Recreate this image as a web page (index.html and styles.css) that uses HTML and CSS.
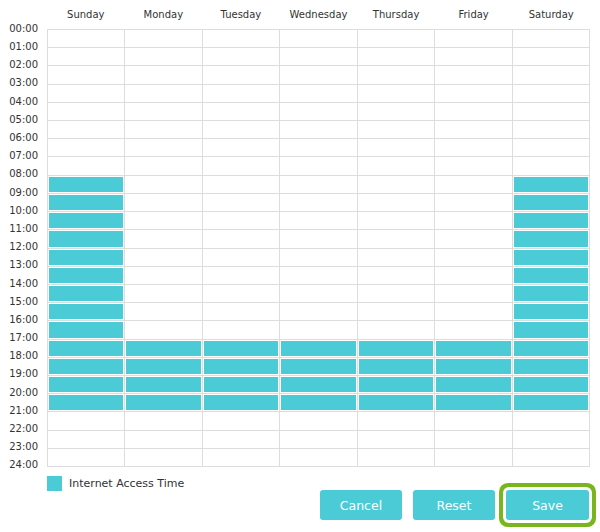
FILE: index.html
```html
<!DOCTYPE html>
<html>
<head>
<meta charset="utf-8">
<link rel="stylesheet" href="styles.css">
</head>
<body>
<div class="page">
  <div class="schedule">
    <div class="times">
      <span>00:00</span><span>01:00</span><span>02:00</span><span>03:00</span><span>04:00</span>
      <span>05:00</span><span>06:00</span><span>07:00</span><span>08:00</span><span>09:00</span>
      <span>10:00</span><span>11:00</span><span>12:00</span><span>13:00</span><span>14:00</span>
      <span>15:00</span><span>16:00</span><span>17:00</span><span>18:00</span><span>19:00</span>
      <span>20:00</span><span>21:00</span><span>22:00</span><span>23:00</span><span>24:00</span>
    </div>
    <div class="main">
      <div class="days">
        <span>Sunday</span><span>Monday</span><span>Tuesday</span><span>Wednesday</span><span>Thursday</span><span>Friday</span><span>Saturday</span>
      </div>
      <div class="grid">
        <div class="c"></div><div class="c"></div><div class="c"></div><div class="c"></div><div class="c"></div><div class="c"></div><div class="c"></div>
        <div class="c"></div><div class="c"></div><div class="c"></div><div class="c"></div><div class="c"></div><div class="c"></div><div class="c"></div>
        <div class="c"></div><div class="c"></div><div class="c"></div><div class="c"></div><div class="c"></div><div class="c"></div><div class="c"></div>
        <div class="c"></div><div class="c"></div><div class="c"></div><div class="c"></div><div class="c"></div><div class="c"></div><div class="c"></div>
        <div class="c"></div><div class="c"></div><div class="c"></div><div class="c"></div><div class="c"></div><div class="c"></div><div class="c"></div>
        <div class="c"></div><div class="c"></div><div class="c"></div><div class="c"></div><div class="c"></div><div class="c"></div><div class="c"></div>
        <div class="c"></div><div class="c"></div><div class="c"></div><div class="c"></div><div class="c"></div><div class="c"></div><div class="c"></div>
        <div class="c"></div><div class="c"></div><div class="c"></div><div class="c"></div><div class="c"></div><div class="c"></div><div class="c"></div>
        <div class="c on"></div><div class="c"></div><div class="c"></div><div class="c"></div><div class="c"></div><div class="c"></div><div class="c on"></div>
        <div class="c on"></div><div class="c"></div><div class="c"></div><div class="c"></div><div class="c"></div><div class="c"></div><div class="c on"></div>
        <div class="c on"></div><div class="c"></div><div class="c"></div><div class="c"></div><div class="c"></div><div class="c"></div><div class="c on"></div>
        <div class="c on"></div><div class="c"></div><div class="c"></div><div class="c"></div><div class="c"></div><div class="c"></div><div class="c on"></div>
        <div class="c on"></div><div class="c"></div><div class="c"></div><div class="c"></div><div class="c"></div><div class="c"></div><div class="c on"></div>
        <div class="c on"></div><div class="c"></div><div class="c"></div><div class="c"></div><div class="c"></div><div class="c"></div><div class="c on"></div>
        <div class="c on"></div><div class="c"></div><div class="c"></div><div class="c"></div><div class="c"></div><div class="c"></div><div class="c on"></div>
        <div class="c on"></div><div class="c"></div><div class="c"></div><div class="c"></div><div class="c"></div><div class="c"></div><div class="c on"></div>
        <div class="c on"></div><div class="c"></div><div class="c"></div><div class="c"></div><div class="c"></div><div class="c"></div><div class="c on"></div>
        <div class="c on"></div><div class="c on"></div><div class="c on"></div><div class="c on"></div><div class="c on"></div><div class="c on"></div><div class="c on"></div>
        <div class="c on"></div><div class="c on"></div><div class="c on"></div><div class="c on"></div><div class="c on"></div><div class="c on"></div><div class="c on"></div>
        <div class="c on"></div><div class="c on"></div><div class="c on"></div><div class="c on"></div><div class="c on"></div><div class="c on"></div><div class="c on"></div>
        <div class="c on"></div><div class="c on"></div><div class="c on"></div><div class="c on"></div><div class="c on"></div><div class="c on"></div><div class="c on"></div>
        <div class="c"></div><div class="c"></div><div class="c"></div><div class="c"></div><div class="c"></div><div class="c"></div><div class="c"></div>
        <div class="c"></div><div class="c"></div><div class="c"></div><div class="c"></div><div class="c"></div><div class="c"></div><div class="c"></div>
        <div class="c"></div><div class="c"></div><div class="c"></div><div class="c"></div><div class="c"></div><div class="c"></div><div class="c"></div>
      </div>
      <div class="legend">
        <span class="swatch"></span>
        <span class="legend-text">Internet Access Time</span>
      </div>
      <div class="buttons">
        <button class="btn">Cancel</button>
        <button class="btn">Reset</button>
        <button class="btn btn-focus">Save</button>
      </div>
    </div>
  </div>
</div>
</body>
</html>
```

FILE: styles.css
```css
* { box-sizing: border-box; }

html, body {
  margin: 0;
  padding: 0;
  background: #fff;
}

body {
  font-family: "DejaVu Sans", Verdana, sans-serif;
  color: #333;
}

.page {
  width: 600px;
  height: 532px;
}

.schedule {
  display: flex;
}

.times {
  width: 47px;
  padding-top: 19.9px;
  padding-right: 9px;
  display: flex;
  flex-direction: column;
  align-items: flex-end;
  font-size: 10px;
}

.times span {
  height: 18.2px;
  line-height: 18.2px;
}

.main {
  width: 543px;
}

.days {
  height: 29px;
  display: grid;
  grid-template-columns: repeat(7, 1fr);
  align-items: center;
  font-size: 10px;
  padding-bottom: 1px;
}

.days span {
  text-align: center;
}

.grid {
  height: 438px;
  display: grid;
  grid-template-columns: repeat(7, 1fr);
  grid-template-rows: repeat(24, 1fr);
  border-top: 1px solid #ddd;
  border-left: 1px solid #ddd;
}

.c {
  border-right: 1px solid #ddd;
  border-bottom: 1px solid #ddd;
}

.c.on {
  background: #4acbd6;
  box-shadow: inset 0 0 0 1px #fff;
}

.legend {
  display: flex;
  align-items: center;
  height: 15px;
  margin-top: 9px;
}

.swatch {
  width: 15px;
  height: 15px;
  background: #4acbd6;
}

.legend-text {
  margin-left: 7px;
  font-size: 11px;
  color: #333;
}

.buttons {
  display: flex;
  justify-content: flex-end;
  gap: 11px;
  margin-top: -1px;
  padding-right: 1px;
}

.btn {
  width: 82px;
  height: 30px;
  border: none;
  border-radius: 3px;
  background: #4acbd6;
  color: #fff;
  font-family: "DejaVu Sans", Verdana, sans-serif;
  font-size: 12.5px;
  padding: 0;
}

.btn-focus {
  width: 83px;
  box-shadow: 0 0 0 3px #fff, 0 0 0 7px #79b51c;
  border-radius: 3px;
}
```
